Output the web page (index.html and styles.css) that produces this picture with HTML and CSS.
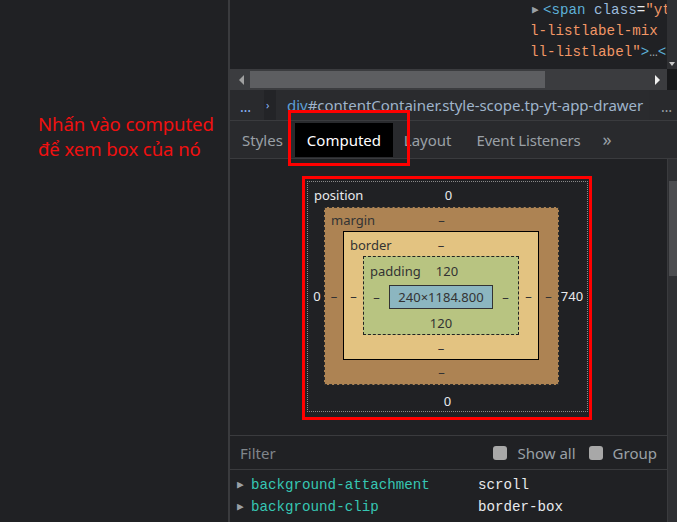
FILE: index.html
```html
<!DOCTYPE html>
<html lang="vi">
<head>
<meta charset="utf-8">
<title>Computed</title>
<link rel="stylesheet" href="styles.css">
</head>
<body>
<div class="root">
  <aside class="left">
    <p class="note">Nhấn vào computed<br>để xem box của nó</p>
  </aside>
  <section class="devtools">
    <div class="code">
      <div class="code-lines">
        <div class="cl"><span class="tri">▶</span><span class="tag">&lt;span</span> <span class="attr">class</span><span class="eq">=</span><span class="val">"yt</span></div>
        <div class="cl"><span class="val">l-listlabel-mix </span></div>
        <div class="cl"><span class="val">ll-listlabel"</span><span class="tag">&gt;</span><span class="ell">…</span><span class="tag">&lt;</span></div>
      </div>
      <div class="vscroll-top"><span class="vs-arrow"></span></div>
    </div>
    <div class="hscroll">
      <span class="arrow-left"></span>
      <div class="htrack"><div class="hthumb"></div></div>
      <span class="arrow-right"></span>
      <span class="corner"></span>
    </div>
    <div class="crumbs">
      <span class="dots">…</span>
      <span class="sep">›</span>
      <span class="crumb"><span class="ctag">div</span>#contentContainer.style-scope.tp-yt-app-drawer</span>
      <span class="dots right">…</span>
    </div>
    <div class="tabs">
      <span class="tab">Styles</span>
      <span class="tab active">Computed</span>
      <span class="tab">Layout</span>
      <span class="tab">Event Listeners</span>
      <span class="tab more">»</span>
      <span class="tab-mark"></span>
    </div>
    <div class="pane">
      <div class="pane-main">
        <div class="bm-area">
          <div class="bm-mark">
          <div class="bm position">
            <div class="bm-top"><span class="lbl">position</span><span class="v">0</span></div>
            <div class="bm-mid"><span class="side l">0</span>
              <div class="bm margin">
                <div class="bm-top"><span class="lbl">margin</span><span class="v">–</span></div>
                <div class="bm-mid"><span class="side l">–</span>
                  <div class="bm border">
                    <div class="bm-top"><span class="lbl">border</span><span class="v">–</span></div>
                    <div class="bm-mid"><span class="side l">–</span>
                      <div class="bm padding">
                        <div class="bm-top"><span class="lbl">padding</span><span class="v">120</span></div>
                        <div class="bm-mid"><span class="side l">–</span>
                          <div class="content">240×1184.800</div>
                          <span class="side r">–</span></div>
                        <div class="bm-bot">120</div>
                      </div>
                      <span class="side r">–</span></div>
                    <div class="bm-bot">–</div>
                  </div>
                  <span class="side r">–</span></div>
                <div class="bm-bot">–</div>
              </div>
              <span class="side r">740</span></div>
            <div class="bm-bot">0</div>
          </div>
          </div>
        </div>
        <div class="filter">
          <span class="filter-label">Filter</span>
          <label class="chk"><span class="box"></span>Show all</label>
          <label class="chk"><span class="box"></span>Group</label>
        </div>
        <div class="props">
          <div class="prop"><span class="ptri">▶</span><span class="pname">background-attachment</span><span class="pval">scroll</span></div>
          <div class="prop"><span class="ptri">▶</span><span class="pname">background-clip</span><span class="pval">border-box</span></div>
          <div class="prop"><span class="ptri">▶</span><span class="pname">background-color</span><span class="pval"><span class="swatch"></span>rgba(0, 0, 0, 0)</span></div>
        </div>
      </div>
      <div class="vscroll"><div class="vthumb"></div></div>
    </div>
  </section>
</div>
</body>
</html>
```

FILE: styles.css
```css
* { box-sizing: border-box; }
html, body { margin: 0; padding: 0; }
body {
  width: 677px;
  height: 522px;
  overflow: hidden;
  background: #202124;
  font-family: "Noto Sans", "Open Sans", sans-serif;
  color: #9aa0a6;
}
.root { display: flex; height: 522px; }
.left {
  width: 230px;
  flex: none;
  background: #202124;
  border-right: 2px solid #3a3b3e;
  padding: 111px 0 0 38px;
}
.note {
  margin: 0;
  color: #f01010;
  font-size: 18.6px;
  line-height: 25px;
  letter-spacing: -0.1px;
}
.devtools { flex: 1; display: flex; flex-direction: column; min-width: 0; }

/* code */
.code { height: 69px; flex: none; display: flex; background: #202124; }
.code-lines {
  flex: 1;
  padding: 0 0 0 300px;
  font-family: "Liberation Mono", "DejaVu Sans Mono", monospace;
  font-size: 14.2px;
  white-space: nowrap;
  overflow: hidden;
}
.cl { height: 21px; line-height: 21px; }
.tri { color: #9aa0a6; font-size: 11px; display: inline-block; width: 13px; padding-left: 2px; vertical-align: 1px; }
.tag { color: #5db0d7; }
.attr { color: #9bbbdc; }
.eq { color: #e8eaed; }
.val { color: #f29766; }
.ell { color: #9aa0a6; }
.vscroll-top { width: 10px; background: #2f3033; position: relative; }
.vs-arrow {
  position: absolute; left: 2px; bottom: 3px;
  border-left: 3px solid transparent; border-right: 3px solid transparent;
  border-top: 4px solid #c8c8c8;
}

/* horizontal scrollbar */
.hscroll { height: 21px; flex: none; display: flex; align-items: center; background: #3b3c3f; }
.arrow-left {
  width: 0; height: 0; margin: 0 6px 0 9px;
  border-top: 5px solid transparent; border-bottom: 5px solid transparent;
  border-right: 5px solid #a0a0a0;
}
.htrack { flex: 1; height: 17px; }
.hthumb { width: 295px; height: 17px; background: #5d5e61; }
.arrow-right {
  width: 0; height: 0; margin: 0 7px 0 6px;
  border-top: 5px solid transparent; border-bottom: 5px solid transparent;
  border-left: 5px solid #f0f0f0;
}
.corner { width: 10px; height: 21px; background: #18191b; }

/* breadcrumbs */
.crumbs {
  height: 31px;
  flex: none;
  display: flex;
  align-items: stretch;
  background: #292a2d;
  border-bottom: 1px solid #3a3b3e;
  font-size: 15px;
  line-height: 30px;
  white-space: nowrap;
}
.dots { color: #8ab4f8; width: 36px; padding-left: 10px; font-size: 14px; padding-top: 2px; }
.sep { width: 12px; background: #232427; color: #8ab4f8; font-size: 11px; padding-left: 2px; margin-left: -2px; }
.crumb { width: 373px; background: #2a2b2e; color: #9fb4cb; padding-left: 11px; letter-spacing: -0.02px; }
.ctag { color: #5d9fd6; }
.dots.right { width: auto; padding-left: 12px; color: #9aa0a6; background: #292a2d; }

/* tabs */
.tabs {
  height: 38px;
  flex: none;
  display: flex;
  align-items: center;
  background: #292a2d;
  border-bottom: 1px solid #3a3b3e;
  position: relative;
  font-size: 15px;
  white-space: nowrap;
}
.tab { color: #9aa0a6; height: 34px; line-height: 34px; }
.tab:first-child { padding: 0 0 0 12px; margin-right: 12px; }
.tab.active { background: #000; color: #fff; padding: 0 13px 0 12px; width: 98px; }
.tab:nth-child(3) { margin-left: 11px; }
.tab:nth-child(4) { margin-left: 25px; letter-spacing: -0.2px; }
.tab.more { margin-left: 22px; font-size: 18px; line-height: 32px; }
.tab-mark {
  position: absolute;
  left: 58px; top: -11px;
  width: 122px; height: 56px;
  border: 3px solid #ff0000;
}

/* pane */
.pane { flex: 1; display: flex; min-height: 0; }
.pane-main { flex: 1; display: flex; flex-direction: column; min-width: 0; }
.vscroll { width: 10px; background: #2f3033; border-left: 1px solid #3a3b3e; padding-top: 22px; }
.vthumb { height: 95px; background: #4c4d50; margin-left: 1px; }

.bm-area {
  height: 276px;
  flex: none;
  display: flex;
  justify-content: center;
  align-items: flex-start;
  padding-top: 17px;
}
.bm-mark {
  border: 3px solid #ff0000;
  padding: 2px 1px 5px 2px;
  margin-right: 3px;
}
.bm {
  font-size: 13px;
  line-height: 16px;
  display: flex;
  flex-direction: column;
  position: relative;
}
.bm-top { display: flex; position: absolute; left: 0; right: 0; }
.bm-mid { display: flex; align-items: center; }
.bm-bot { text-align: center; }
.lbl { position: absolute; left: 6px; }
.v { flex: 1; text-align: center; }
.side { text-align: center; flex: none; }

.position {
  width: 281px;
  height: 231px;
  border: 1px dotted #8a8a8a;
  color: #e8eaed;
  padding-top: 25px;
}
.position > .bm-top { top: 5px; }
.position > .bm-top > .v { padding-left: 2px; }
.position > .bm-mid > .side.l { width: 16px; padding-left: 2px; }
.position > .bm-mid > .side.r { width: 28px; padding-right: 2px; }
.position > .bm-bot { margin-top: 8px; }

.margin {
  width: 235px;
  height: 178px;
  background: #ad8353;
  border: 1px dashed #2d2d2d;
  color: #333;
  padding-top: 23px;
}
.margin > .bm-top { top: 4px; }
.margin > .bm-mid > .side { width: 18px; }
.margin > .bm-mid > .side.r { width: 19px; }
.margin > .bm-bot { margin-top: 4px; }

.border {
  width: 196px;
  height: 129px;
  background: #e3c381;
  border: 1px solid #000;
  padding-top: 24px;
}
.border > .bm-top { top: 5px; }
.border > .bm-mid > .side { width: 19px; }
.border > .bm-bot { margin-top: 5px; }

.padding {
  width: 156px;
  height: 79px;
  background: #b8c481;
  border: 1px dashed #222;
  padding-top: 28px;
}
.padding > .bm-top { top: 6px; }
.padding > .bm-top > .v { padding-left: 12px; }
.padding > .bm-mid > .side { width: 25px; }
.padding > .bm-bot { margin-top: 6px; }

.content {
  width: 104px;
  height: 24px;
  flex: none;
  background: #8cb6c0;
  border: 1px solid #333;
  text-align: center;
  line-height: 22px;
  color: #333;
}

/* filter */
.filter {
  height: 35px;
  flex: none;
  border-top: 1px solid #3a3b3e;
  border-bottom: 1px solid #3a3b3e;
  display: flex;
  align-items: center;
  padding-left: 10px;
  font-size: 15px;
  color: #80868b;
}
.filter-label { flex: 1; }
.chk { display: flex; align-items: center; color: #9aa0a6; margin-right: 10px; }
.chk + .chk { margin-left: 3px; }
.box {
  width: 14px; height: 14px;
  background: #a8a8a8;
  border-radius: 3px;
  margin-right: 10px;
}

/* props */
.props { flex: none; padding-top: 4px; font-family: "Liberation Mono", "DejaVu Sans Mono", monospace; font-size: 14.2px; }
.prop { height: 22px; line-height: 22px; display: flex; white-space: nowrap; }
.ptri { width: 21px; padding-left: 7px; font-size: 11px; color: #9aa0a6; }
.pname { width: 227px; color: #36c6b3; }
.pval { color: #e8eaed; display: flex; align-items: center; }
.swatch { width: 12px; height: 12px; border: 1px solid #888; background: #555; margin-right: 6px; }
```
